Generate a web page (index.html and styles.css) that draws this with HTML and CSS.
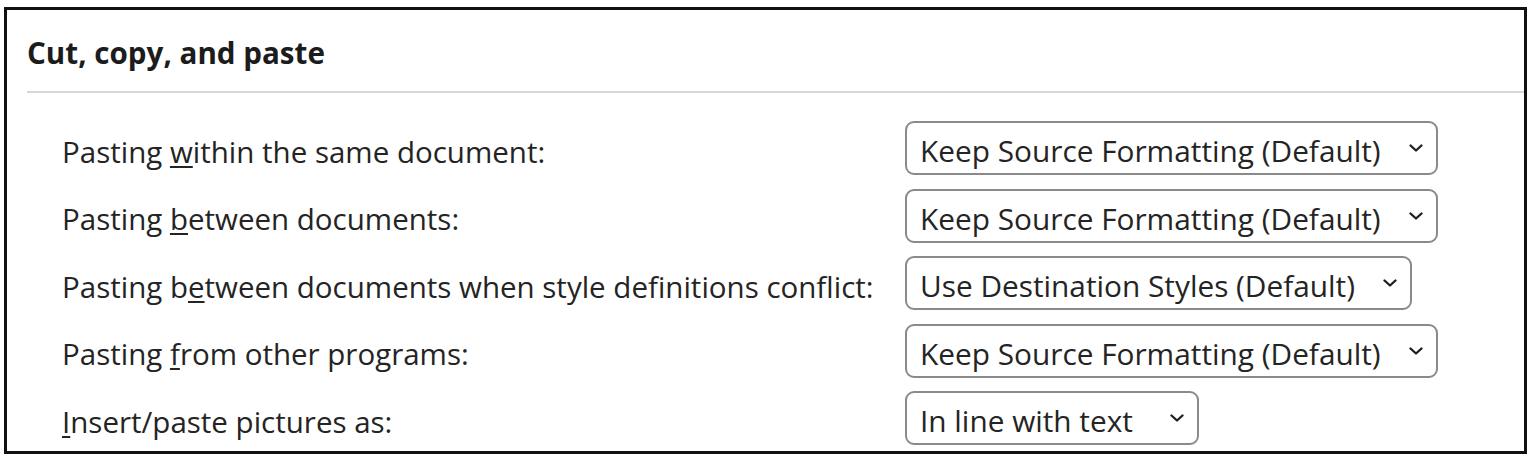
FILE: index.html
```html
<!DOCTYPE html>
<html lang="en">
<head>
<meta charset="utf-8">
<title>Cut, copy, and paste</title>
<link rel="stylesheet" href="styles.css">
</head>
<body>
<section class="panel">
  <header class="panel-head">
    <h2 class="panel-title">Cut, copy, and paste</h2>
  </header>
  <div class="options">
    <label class="opt-label">Pasting <u>w</u>ithin the same document:</label>
    <div class="select"><span class="select-text">Keep Source Formatting (Default)</span><svg class="chev" viewBox="0 0 14 8" width="14" height="8"><polyline points="1.5,1.5 7,6.5 12.5,1.5"/></svg></div>

    <label class="opt-label">Pasting <u>b</u>etween documents:</label>
    <div class="select"><span class="select-text">Keep Source Formatting (Default)</span><svg class="chev" viewBox="0 0 14 8" width="14" height="8"><polyline points="1.5,1.5 7,6.5 12.5,1.5"/></svg></div>

    <label class="opt-label">Pasting b<u>e</u>tween documents when style definitions conflict:</label>
    <div class="select"><span class="select-text">Use Destination Styles (Default)</span><svg class="chev" viewBox="0 0 14 8" width="14" height="8"><polyline points="1.5,1.5 7,6.5 12.5,1.5"/></svg></div>

    <label class="opt-label">Pasting <u>f</u>rom other programs:</label>
    <div class="select"><span class="select-text">Keep Source Formatting (Default)</span><svg class="chev" viewBox="0 0 14 8" width="14" height="8"><polyline points="1.5,1.5 7,6.5 12.5,1.5"/></svg></div>

    <label class="opt-label"><u>I</u>nsert/paste pictures as:</label>
    <div class="select select-short"><span class="select-text">In line with text</span><svg class="chev" viewBox="0 0 14 8" width="14" height="8"><polyline points="1.5,1.5 7,6.5 12.5,1.5"/></svg></div>
  </div>
</section>
</body>
</html>
```
FILE: styles.css
```css
* { box-sizing: border-box; }

html, body {
  margin: 0;
  padding: 0;
  background: #ffffff;
}

body {
  font-family: "Open Sans", "Noto Sans", sans-serif;
  color: #242424;
  padding: 7px 0 0 4px;
}

.panel {
  width: 1523px;
  height: 447px;
  border: 3px solid #111111;
  overflow: hidden;
  background: #ffffff;
}

.panel-head {
  margin-left: 20px;
  padding: 23px 0 18px 0;
  border-bottom: 2px solid #d6d6d6;
}

.panel-title {
  margin: 0;
  font-size: 29.6px;
  line-height: 40px;
  font-weight: 700;
  color: #1c1c1c;
}

.options {
  display: grid;
  grid-template-columns: 843px auto;
  row-gap: 13.5px;
  align-items: center;
  justify-items: start;
  padding: 28px 0 0 55px;
}

.opt-label {
  font-size: 29.5px;
  line-height: 40px;
  padding-top: 7px;
  color: #242424;
  white-space: nowrap;
}

.opt-label u {
  text-decoration-thickness: 2px;
  text-underline-offset: 3px;
}

.select {
  display: flex;
  align-items: center;
  height: 54px;
  padding: 0 13px 0 13px;
  border: 2px solid #8a8a8a;
  border-radius: 9px;
  background: #ffffff;
}

.select-text {
  font-size: 29.8px;
  line-height: 40px;
  padding-top: 6px;
  color: #242424;
  white-space: nowrap;
}

.chev {
  margin-left: 28px;
  flex: none;
  fill: none;
  stroke: #1e1e1e;
  stroke-width: 2.3;
  stroke-linecap: round;
  stroke-linejoin: round;
}

.select-short .chev {
  margin-left: 37px;
}
```
